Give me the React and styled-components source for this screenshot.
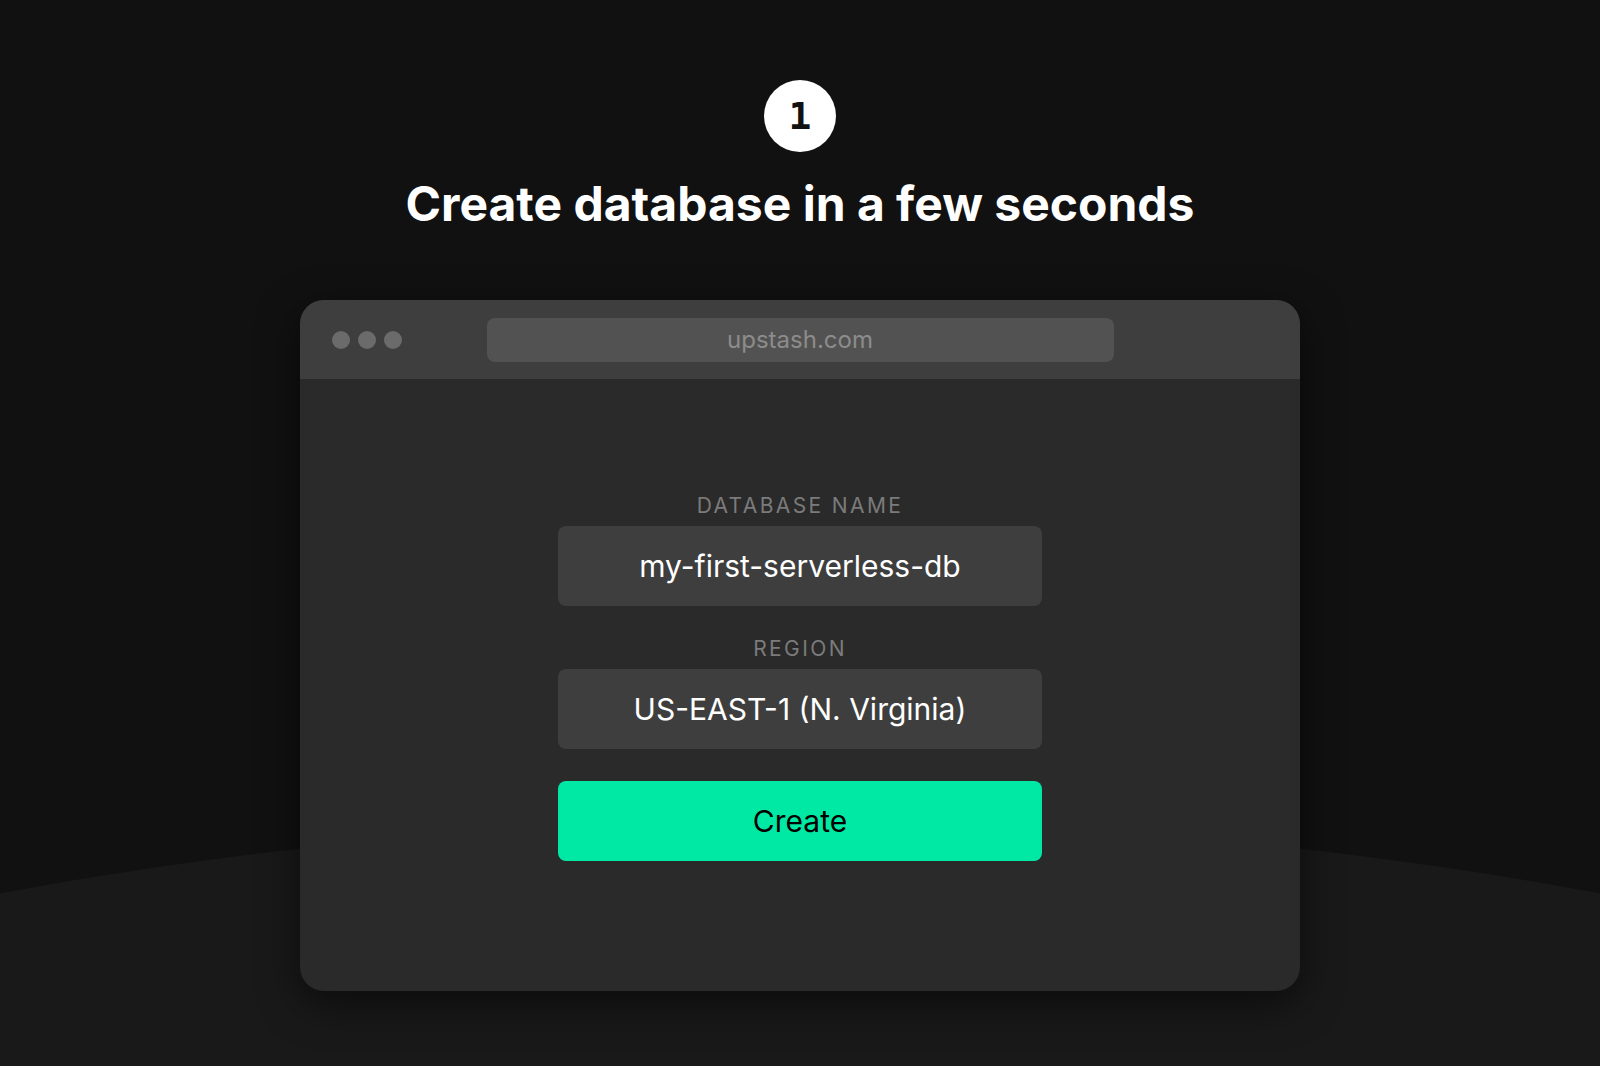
import styled, { createGlobalStyle } from "styled-components";

const GlobalStyle = createGlobalStyle`
  html, body {
    margin: 0;
    padding: 0;
    background: #111111;
  }
  * {
    box-sizing: border-box;
  }
`;

const Page = styled.div`
  position: relative;
  min-height: 1066px;
  overflow: hidden;
  background: #111111;
  font-family: Inter, "Noto Sans", sans-serif;
  display: flex;
  flex-direction: column;
  align-items: center;
  padding-top: 80px;
`;

// big soft arc behind the lower half
const Arc = styled.div`
  position: absolute;
  left: calc(50% - 4400px);
  top: 820px;
  width: 8800px;
  height: 8800px;
  border-radius: 50%;
  background: #191919;
  z-index: 0;
`;

const Content = styled.div`
  position: relative;
  z-index: 1;
  display: flex;
  flex-direction: column;
  align-items: center;
`;

const StepBadge = styled.div`
  width: 72px;
  height: 72px;
  border-radius: 50%;
  background: #ffffff;
  color: #111111;
  display: flex;
  align-items: center;
  justify-content: center;
  font-family: "DejaVu Sans Mono", monospace;
  font-size: 38px;
  font-weight: 700;
`;

const Title = styled.h1`
  margin: 23px 0 67px;
  font-size: 48px;
  line-height: 58px;
  font-weight: 700;
  color: #ffffff;
`;

const Browser = styled.div`
  width: 1000px;
  border-radius: 24px;
  background: #2a2a2a;
  overflow: hidden;
  box-shadow: 0 12px 40px rgba(0, 0, 0, 0.55);
`;

const TopBar = styled.div`
  height: 79px;
  background: #3e3e3e;
  display: grid;
  grid-template-columns: 1fr 627px 1fr;
  align-items: center;
  padding: 0 32px;
`;

const Dots = styled.div`
  display: flex;
  gap: 8px;
`;

const Dot = styled.span`
  width: 18px;
  height: 18px;
  border-radius: 50%;
  background: #6b6b6b;
`;

const UrlBar = styled.div`
  height: 44px;
  border-radius: 8px;
  background: #525252;
  color: #8c8c8c;
  font-size: 24px;
  display: flex;
  align-items: center;
  justify-content: center;
`;

const Body = styled.div`
  display: flex;
  flex-direction: column;
  align-items: center;
  padding: 115px 0 130px;
`;

const Label = styled.div`
  font-size: 21px;
  line-height: 24px;
  letter-spacing: 2.4px;
  color: #7b7b7b;
  margin: ${(p) => (p.first ? "0" : "31px")} 0 8px;
`;

const Field = styled.div`
  width: 484px;
  height: 80px;
  border-radius: 8px;
  background: #3e3e3e;
  color: #ffffff;
  font-size: 30px;
  display: flex;
  align-items: center;
  justify-content: center;
`;

const CreateButton = styled.button`
  margin-top: 32px;
  width: 484px;
  height: 80px;
  border: none;
  border-radius: 8px;
  background: #00e9a4;
  color: #000000;
  font-family: inherit;
  font-size: 30px;
  cursor: pointer;
`;

const App = () => {
  return (
    <>
      <GlobalStyle />
      <Page>
        <Arc />
        <Content>
          <StepBadge>1</StepBadge>
          <Title>Create database in a few seconds</Title>
          <Browser>
            <TopBar>
              <Dots>
                <Dot />
                <Dot />
                <Dot />
              </Dots>
              <UrlBar>upstash.com</UrlBar>
            </TopBar>
            <Body>
              <Label first>DATABASE NAME</Label>
              <Field>my-first-serverless-db</Field>
              <Label>REGION</Label>
              <Field>US-EAST-1 (N. Virginia)</Field>
              <CreateButton>Create</CreateButton>
            </Body>
          </Browser>
        </Content>
      </Page>
    </>
  );
};

export default App;
